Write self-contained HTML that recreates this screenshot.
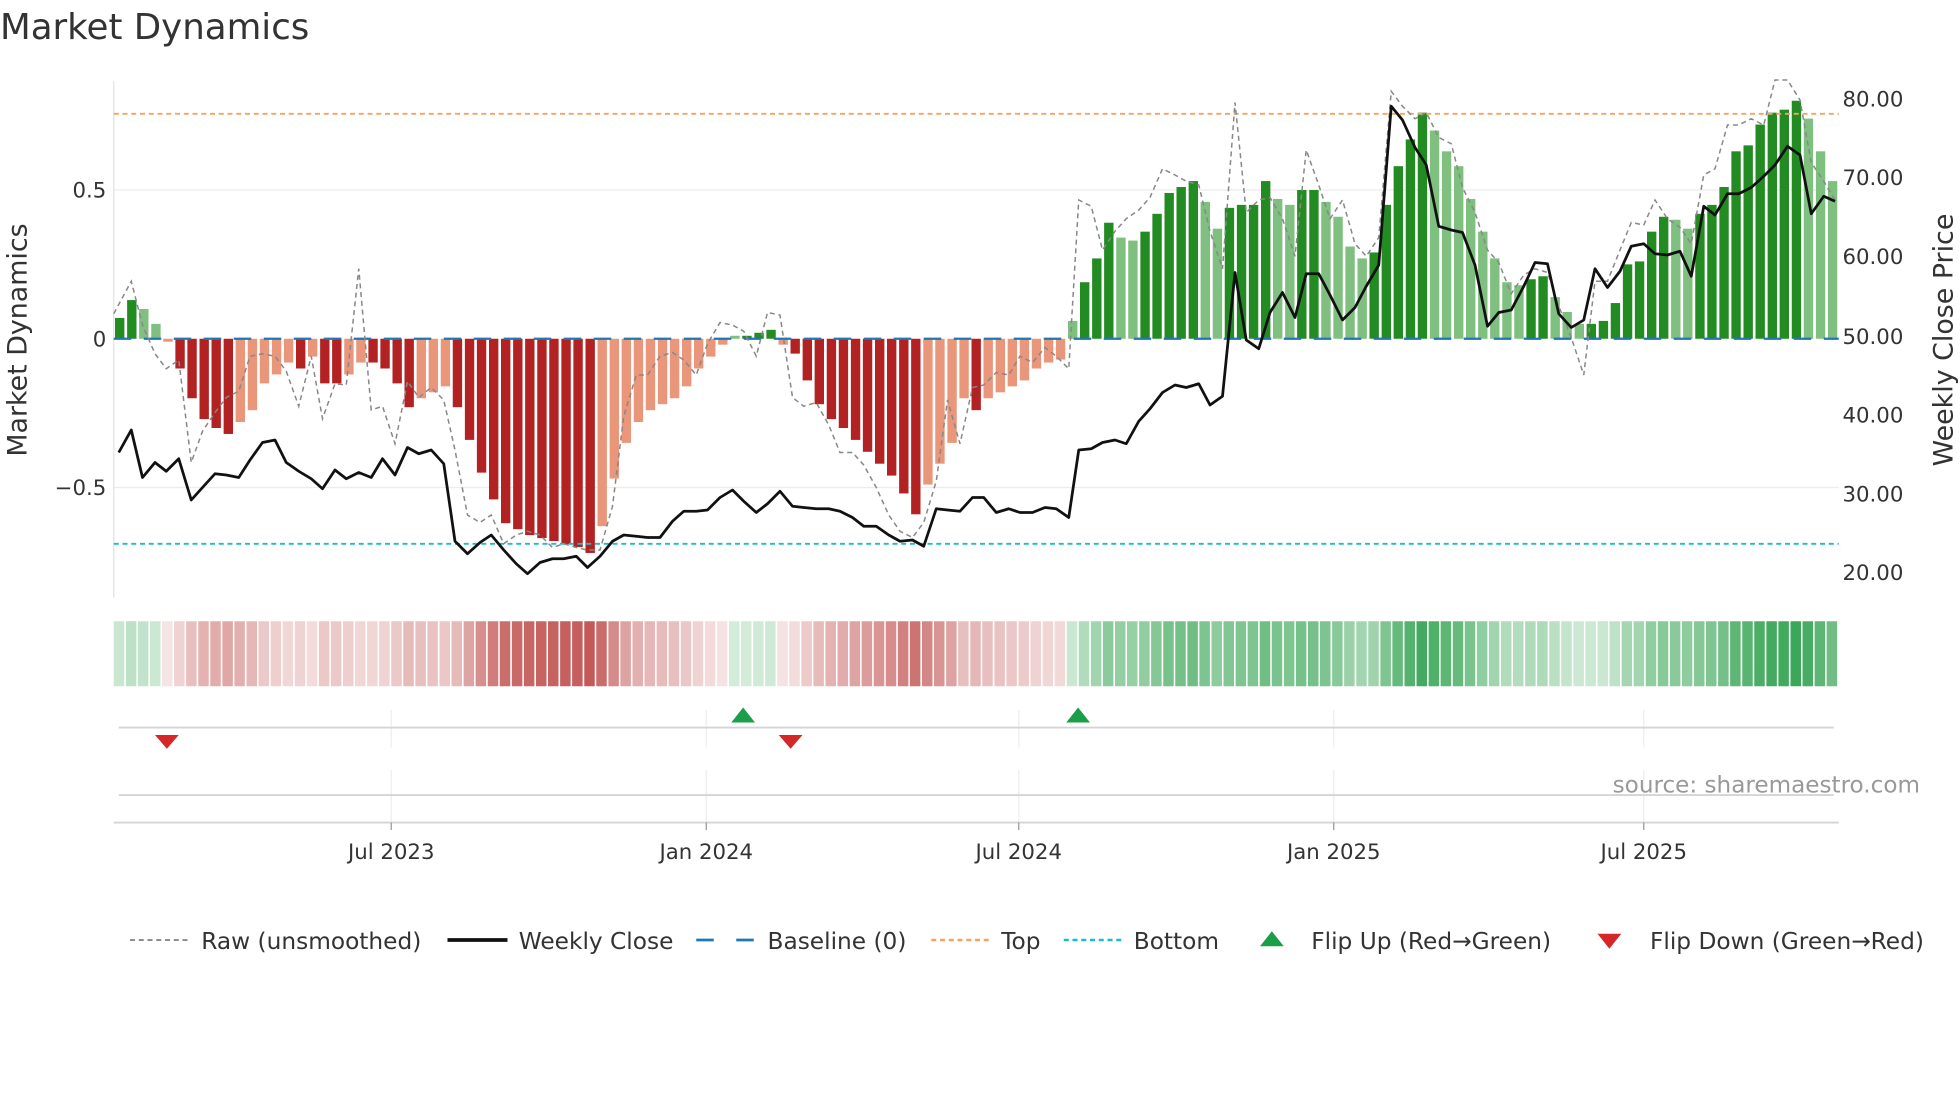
<!DOCTYPE html>
<html><head><meta charset="utf-8"><style>
html,body{margin:0;padding:0;background:#fff;width:1960px;height:1102px;overflow:hidden}
svg{display:block;font-family:"DejaVu Sans","Liberation Sans",sans-serif}
</style></head><body>
<svg id="s" width="1960" height="1102" viewBox="0 0 1568 881.6" xmlns="http://www.w3.org/2000/svg">
<rect width="1568" height="882" fill="#fff"/>
<text x="0" y="31" font-size="28.5" fill="#333">Market Dynamics</text>
<g stroke="#ececec" stroke-width="1">
<line x1="91" y1="152" x2="1471" y2="152"/><line x1="91" y1="390" x2="1471" y2="390"/>
</g>
<line x1="91" y1="65" x2="91" y2="478" stroke="#e2e2e2"/>
<g id="bars"></g>
<g id="heat"></g>
<line x1="91" y1="91" x2="1471" y2="91" stroke="#f4a460" stroke-width="1.5" stroke-dasharray="4,3"/>
<line x1="91" y1="435" x2="1471" y2="435" stroke="#17becf" stroke-width="1.5" stroke-dasharray="4,3"/>
<line x1="91" y1="271" x2="1471" y2="271" stroke="#1f77b4" stroke-width="1.8" stroke-dasharray="14,10"/>
<polyline id="raw" fill="none" stroke="#888" stroke-width="1.2" stroke-dasharray="4,3"/>
<polyline id="close" fill="none" stroke="#111" stroke-width="2.2" stroke-linejoin="round"/>
<g font-size="17" fill="#333">
<text x="85" y="158" text-anchor="end">0.5</text>
<text x="85" y="277" text-anchor="end">0</text>
<text x="85" y="396" text-anchor="end">−0.5</text>
<text x="1474" y="85">80.00</text><text x="1474" y="148">70.00</text><text x="1474" y="211">60.00</text>
<text x="1474" y="275">50.00</text><text x="1474" y="338">40.00</text><text x="1474" y="401">30.00</text><text x="1474" y="464">20.00</text>
</g>
<text transform="translate(21,272) rotate(-90)" font-size="21.5" fill="#333" text-anchor="middle">Market Dynamics</text>
<text transform="translate(1562,272) rotate(-90)" font-size="21.5" fill="#333" text-anchor="middle">Weekly Close Price</text>
<g stroke="#eee"><line x1="313" y1="568" x2="313" y2="598"/><line x1="565" y1="568" x2="565" y2="598"/><line x1="815" y1="568" x2="815" y2="598"/><line x1="1067" y1="568" x2="1067" y2="598"/><line x1="1315" y1="568" x2="1315" y2="598"/>
<line x1="313" y1="616" x2="313" y2="658"/><line x1="565" y1="616" x2="565" y2="658"/><line x1="815" y1="616" x2="815" y2="658"/><line x1="1067" y1="616" x2="1067" y2="658"/><line x1="1315" y1="616" x2="1315" y2="658"/></g>
<g stroke="#d4d4d4" stroke-width="1.5"><line x1="95" y1="582" x2="1467" y2="582"/><line x1="95" y1="636" x2="1467" y2="636"/><line x1="91" y1="658" x2="1471" y2="658"/></g>
<g stroke="#999"><line x1="313" y1="658" x2="313" y2="664"/><line x1="565" y1="658" x2="565" y2="664"/><line x1="815" y1="658" x2="815" y2="664"/><line x1="1067" y1="658" x2="1067" y2="664"/><line x1="1315" y1="658" x2="1315" y2="664"/></g>
<g fill="#d62728"><polygon points="124,588 143,588 133.5,599"/><polygon points="623,588 642,588 632.5,599"/></g>
<g fill="#1a9e48"><polygon points="585,578 604,578 594.5,566"/><polygon points="853,578 872,578 862.5,566"/></g>
<text x="1536" y="634" font-size="18.5" fill="#999" text-anchor="end">source: sharemaestro.com</text>
<g font-size="17" fill="#333" text-anchor="middle">
<text x="313" y="687">Jul 2023</text><text x="565" y="687">Jan 2024</text><text x="815" y="687">Jul 2024</text><text x="1067" y="687">Jan 2025</text><text x="1315" y="687">Jul 2025</text></g>
<g font-size="18.6" fill="#333">
<line x1="104" y1="752" x2="150" y2="752" stroke="#888" stroke-width="1.5" stroke-dasharray="4,3"/><text x="161" y="759">Raw (unsmoothed)</text>
<line x1="358" y1="752" x2="406" y2="752" stroke="#111" stroke-width="3"/><text x="415" y="759">Weekly Close</text>
<line x1="557" y1="752" x2="604" y2="752" stroke="#1f77b4" stroke-width="2.2" stroke-dasharray="14,18"/><text x="614" y="759">Baseline (0)</text>
<line x1="745" y1="752" x2="792" y2="752" stroke="#f4a460" stroke-width="2" stroke-dasharray="4,3"/><text x="801" y="759">Top</text>
<line x1="851" y1="752" x2="898" y2="752" stroke="#17becf" stroke-width="2" stroke-dasharray="4,3"/><text x="907" y="759">Bottom</text>
<polygon points="1008,757 1027,757 1017.5,745" fill="#1a9e48"/><text x="1049" y="759">Flip Up (Red→Green)</text>
<polygon points="1278,747 1297,747 1287.5,759" fill="#d62728"/><text x="1320" y="759">Flip Down (Green→Red)</text>
</g>
</svg>
<script>
var v=[0.07,0.13,0.1,0.05,-0.01,-0.1,-0.2,-0.27,-0.3,-0.32,-0.28,-0.24,-0.15,-0.12,-0.08,-0.1,-0.06,-0.15,-0.15,-0.12,-0.08,-0.08,-0.1,-0.15,-0.23,-0.2,-0.18,-0.16,-0.23,-0.34,-0.45,-0.54,-0.62,-0.64,-0.66,-0.67,-0.68,-0.69,-0.7,-0.72,-0.63,-0.47,-0.35,-0.28,-0.24,-0.22,-0.2,-0.16,-0.1,-0.06,-0.02,0.01,0.01,0.02,0.03,-0.02,-0.05,-0.14,-0.22,-0.27,-0.3,-0.34,-0.38,-0.42,-0.46,-0.52,-0.59,-0.49,-0.42,-0.35,-0.2,-0.24,-0.2,-0.18,-0.16,-0.14,-0.1,-0.08,-0.07,0.06,0.19,0.27,0.39,0.34,0.33,0.36,0.42,0.49,0.51,0.53,0.46,0.37,0.44,0.45,0.45,0.53,0.47,0.45,0.5,0.5,0.46,0.41,0.31,0.27,0.29,0.45,0.58,0.67,0.76,0.7,0.63,0.58,0.47,0.36,0.27,0.19,0.18,0.2,0.21,0.14,0.09,0.05,0.05,0.06,0.12,0.25,0.26,0.36,0.41,0.4,0.37,0.42,0.45,0.51,0.63,0.65,0.72,0.76,0.77,0.8,0.74,0.63,0.53];
var n=v.length,x0=91,x1=1471,w=(x1-x0)/n,ns="http://www.w3.org/2000/svg";
var B=document.getElementById('bars'),H=document.getElementById('heat');
function mix(a,b,t){return 'rgb('+a.map(function(c,i){return Math.round(c+(b[i]-c)*t)}).join(',')+')';}
for(var i=0;i<n;i++){var val=v[i],prev=i?v[i-1]:0,strong=Math.abs(val)>=Math.abs(prev)-0.001;
var col=val>=0?(strong?'#228b22':'#7fbf7f'):(strong?'#b22222':'#e9967a');
var r=document.createElementNS(ns,'rect');var h=Math.abs(val)*238;
r.setAttribute('x',(x0+i*w+1).toFixed(1));r.setAttribute('width',(w-2.2).toFixed(1));
r.setAttribute('y',val>=0?271-h:271);r.setAttribute('height',Math.max(h,1.5));r.setAttribute('fill',col);B.appendChild(r);
var t=val>=0?Math.min(1,0.2+Math.abs(val)/1.1):Math.min(1,0.15+Math.abs(val)/0.85);
var c=val>=0?mix([255,255,255],[45,160,75],t):mix([255,255,255],[195,90,88],t);
var q=document.createElementNS(ns,'rect');q.setAttribute('x',(x0+i*w).toFixed(1));q.setAttribute('width',(w-1.3).toFixed(1));
q.setAttribute('y',497);q.setAttribute('height',52);q.setAttribute('fill',c);H.appendChild(q);}
document.getElementById('close').setAttribute('points',"95,362 105,344 114,382 124,370 133,377 143,367 153,400 162,390 172,379 181,380 191,382 200,368 210,354 220,352 229,370 239,377 249,383 258,391 268,376 277,383 287,378 297,382 306,367 316,380 326,358 335,363 345,360 355,371 364,433 374,443 384,434 393,428 403,440 413,451 422,459 432,450 442,447 451,447 461,445 470,454 480,445 490,433 499,428 509,429 518,430 528,430 538,417 547,409 557,409 566,408 576,398 586,392 595,401 605,410 614,403 624,393 634,405 643,406 653,407 663,407 672,409 682,414 691,421 701,421 711,428 720,433 730,432 739,437 749,407 758,408 768,409 778,398 787,398 797,410 807,407 816,410 826,410 836,406 845,407 855,414 863,360 873,359 882,354 892,352 901,355 911,337 920,327 930,314 940,308 949,310 959,307 968,324 978,317 988,218 997,272 1007,279 1016,250 1026,234 1036,254 1045,219 1055,219 1064,236 1074,256 1084,246 1093,229 1103,212 1113,85 1122,96 1132,118 1141,132 1151,181 1161,184 1170,186 1180,212 1190,261 1199,250 1209,248 1219,229 1228,210 1238,211 1247,251 1257,262 1267,256 1276,215 1286,230 1296,217 1305,197 1315,195 1324,203 1334,204 1344,201 1353,221 1363,165 1372,172 1382,155 1391,155 1401,150 1411,141 1420,132 1430,117 1440,124 1449,171 1459,157 1468,161");
document.getElementById('raw').setAttribute('points',"91,251 105,225 114,260 124,283 133,295 143,288 153,370 162,345 172,330 181,318 191,313 200,285 210,283 220,285 229,297 239,325 249,285 258,335 268,307 277,308 287,215 297,328 306,325 316,355 326,305 335,318 345,310 355,320 364,360 374,412 384,418 393,412 403,435 413,428 422,425 432,428 442,438 451,435 461,438 470,440 480,440 490,405 499,333 509,300 518,300 528,285 538,282 547,288 557,300 566,275 576,258 586,260 595,265 605,285 614,250 624,252 634,318 643,325 653,322 663,340 672,362 682,362 691,372 701,390 711,412 720,425 730,430 739,418 749,385 758,320 768,355 778,310 787,308 797,298 807,300 816,285 826,290 836,278 845,285 855,295 863,160 873,165 882,200 892,185 901,175 911,168 920,158 930,135 940,140 949,145 959,148 968,185 978,215 988,82 997,170 1007,160 1016,158 1026,175 1036,205 1045,120 1055,148 1064,175 1074,160 1084,195 1093,205 1103,190 1113,73 1122,85 1132,95 1141,90 1151,110 1161,115 1170,150 1180,170 1190,200 1199,210 1209,235 1219,220 1228,215 1238,218 1247,245 1257,270 1267,300 1276,225 1286,225 1296,200 1305,178 1315,180 1324,160 1334,175 1344,182 1353,195 1363,140 1372,135 1382,100 1391,100 1401,95 1411,100 1420,64 1430,64 1440,80 1449,130 1459,145 1468,160");
</script>
</body></html>
